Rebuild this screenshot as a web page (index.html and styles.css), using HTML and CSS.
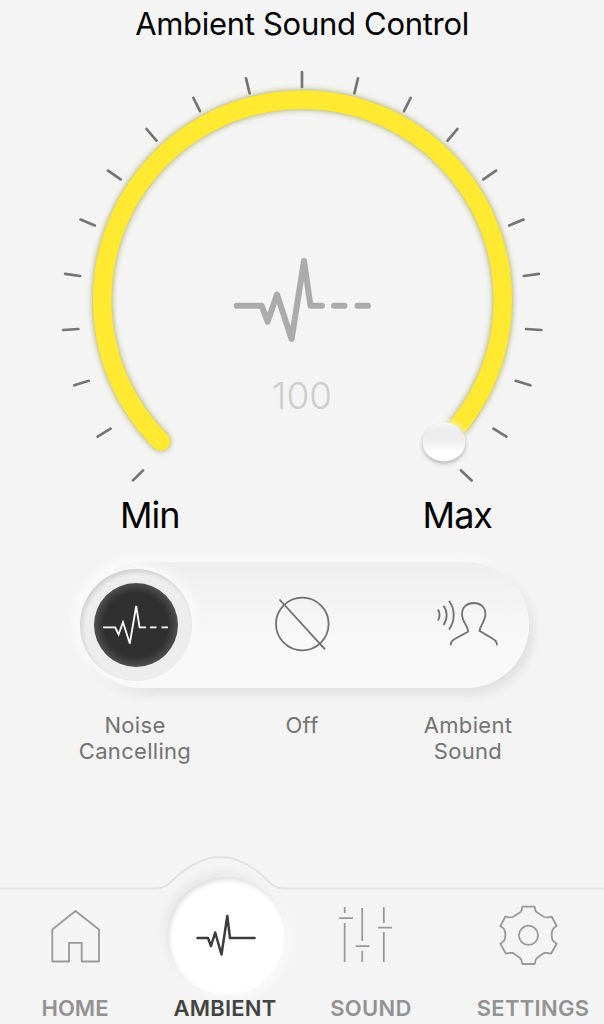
FILE: index.html
```html
<!DOCTYPE html>
<html lang="en">
  <head>
    <meta charset="UTF-8" />
    <meta name="viewport" content="width=device-width, initial-scale=1.0" />
    <title>Ambient Sound Control</title>
    <link rel="stylesheet" href="styles.css">
  </head>
  <body>
    <div class="screen">
      <h1>Ambient Sound Control</h1>

      <svg class="gauge" viewBox="0 50 604 440">
        <defs>
          <linearGradient id="thumbFill" x1="0" y1="0" x2="0" y2="1">
            <stop offset="0" stop-color="#f8f8f8" />
            <stop offset="0.2" stop-color="#ececec" />
            <stop offset="0.45" stop-color="#eeeeee" />
            <stop offset="0.75" stop-color="#ffffff" />
            <stop offset="1" stop-color="#fafafa" />
          </linearGradient>
        </defs>
        <g class="ticks">
          <path d="M302 72V87" />
          <path d="M246 78.3L249.6 93.3M358 78.3L354.4 93.3" />
          <path d="M193.4 98L200 111.2M410.6 98L404 111.2" />
          <path d="M146.6 129L156.4 140.6M457.4 129L447.6 140.6" />
          <path d="M108 170.6L120.6 179.4M496 170.6L483.4 179.4" />
          <path d="M80.6 219.6L94.8 225.4M523.4 219.6L509.2 225.4" />
          <path d="M65.2 273.8L80.2 276M538.8 273.8L523.8 276" />
          <path d="M63.2 330L78.4 329M541.3 330L526.1 329" />
          <path d="M74.2 385.3L88.8 380.8M530.3 385.3L515.7 380.8" />
          <path d="M97.6 436.6L110.6 428.7M506.4 436.6L493.4 428.7" />
          <path d="M133 480.4L143 470.4M471.6 480.4L461 470.4" />
        </g>
        <path class="arc" d="M160.8 441.5A200.3 200.3 0 1 1 444.2 441.5" />
        <g class="pulse">
          <path d="M236.7 305.8H261.7L267.6 321.7L277 294.5L291.6 339L304 261L310.5 305.8H322" />
          <path d="M334 305.8H344.5M357.5 305.8H368" />
        </g>
        <text class="value" x="302" y="409">100</text>
        <ellipse class="thumb" cx="444" cy="442" rx="21.5" ry="19.5" />
      </svg>

      <div class="range">
        <span>Min</span>
        <span>Max</span>
      </div>

      <div class="switch">
        <button class="mode mode-active" aria-label="Noise Cancelling">
          <svg width="84" height="84" viewBox="0 0 84 84">
            <path d="M9 44.3H21.2L24.6 51.5L29 39.3L35.8 60.5L42.2 23L45.6 44.3H52M56 44.3H62.5M67.5 44.3H74" />
          </svg>
        </button>
        <button class="mode" aria-label="Off">
          <svg width="84" height="84" viewBox="0 0 84 84">
            <circle cx="42.3" cy="41" r="26.3" />
            <path d="M19.5 16.5L65 66.3" />
          </svg>
        </button>
        <button class="mode" aria-label="Ambient Sound">
          <svg width="84" height="84" viewBox="0 0 84 84">
            <path d="M25.7 62.3C25.7 58.5 27.3 57.3 31 55.2L43 48.7C43.5 43 37 39.5 37 31C37 24 42 20 48.7 20S60.4 24 60.4 31C60.4 38 55.2 42.5 54.5 47.8L66.5 55C70 57 72 58.3 72 62.3" />
            <path d="M13 26.5C15 30 15 34 13 37.5M18.5 22.7C22.7 28 22.7 36 18.5 42M24 18C30.2 25.5 30.2 38 24 46.5" />
          </svg>
        </button>
      </div>

      <div class="labels">
        <span>Noise<br>Cancelling</span>
        <span>Off</span>
        <span>Ambient<br>Sound</span>
      </div>

      <nav>
        <svg class="nav-edge" viewBox="0 0 604 168">
          <path d="M0 32.5H156C164 32.5 168 29 174 23C190 8 204 1 220 1S250 8 264 21C271 28 275 32.5 284 32.5H604" />
        </svg>
        <a class="tab">
          <svg width="60" height="60" viewBox="0 0 60 60">
            <path d="M7.3 24.5L30.5 6L54 24.5V56.5H36.7V37.8H24V56.5H7.3Z" />
          </svg>
          <span>HOME</span>
        </a>
        <a class="tab tab-active">
          <div class="bubble">
            <svg width="60" height="60" viewBox="0 0 60 60">
              <path d="M1.5 32H12L15 40L19.2 26.5L25.5 48.5L31.3 10L34 32H58.5" />
            </svg>
          </div>
          <span>AMBIENT</span>
        </a>
        <a class="tab tab-sound">
          <svg width="60" height="60" viewBox="0 0 60 60">
            <path d="M9.7 2V8M9.7 18V57M4 13.2H18M27.2 3V36M27.2 46V57M20.7 41.2H34.5M48.8 2V18M48.8 27V57M43 22.6H57" />
          </svg>
          <span>SOUND</span>
        </a>
        <a class="tab tab-settings">
          <svg width="60" height="60" viewBox="0 0 60 60">
            <path d="M24.3 1.7H36.7Q37 5.8 38.7 7.3L46.3 12Q49.5 12.8 53.7 11.7L58.7 21Q54.8 23.2 54.3 25.5Q53 30 54.3 34.5Q54.8 36.5 58.7 38.8L53 48.7Q49.5 47.6 46 48Q42.5 50.2 38.7 53.3Q37 55 36.7 59H24.3Q24 55 22.3 53.3Q18.5 50.2 15 48Q11.5 47.6 8 48.7L2.3 38.8Q6.2 36.5 6.7 34.5Q8 30 6.7 25.5Q6.2 23.2 2.3 21L7.3 11.7Q11.5 12.8 14.7 12L22.3 7.3Q24 5.8 24.3 1.7Z" />
            <circle cx="30.5" cy="30.3" r="9.6" />
          </svg>
          <span>SETTINGS</span>
        </a>
      </nav>
    </div>
  </body>
</html>
```

FILE: styles.css
```css
* {
  box-sizing: border-box;
}
body {
  margin: 0;
  font-family: Inter, Roboto, "Liberation Sans", sans-serif;
  background-color: #f4f4f4;
  color: #000;
}
.screen {
  width: 604px;
  height: 1024px;
  overflow: hidden;
  display: flex;
  flex-direction: column;
}
h1 {
  margin: 0;
  height: 50px;
  line-height: 48px;
  font-size: 31px;
  font-weight: 400;
  letter-spacing: -0.3px;
  text-align: center;
}
.gauge {
  display: block;
  width: 604px;
  height: 440px;
}
.ticks {
  fill: none;
  stroke: #747474;
  stroke-width: 2.7;
  stroke-linecap: round;
}
.arc {
  fill: none;
  stroke: #ffe931;
  stroke-width: 18.5;
  stroke-linecap: round;
  filter: drop-shadow(0 0 3px rgba(125, 125, 0, 0.7));
}
.pulse {
  fill: none;
  stroke: #ababab;
  stroke-width: 6;
  stroke-linecap: round;
  stroke-linejoin: round;
}
.value {
  fill: #cdcdcd;
  font-size: 37px;
  font-weight: 300;
  text-anchor: middle;
}
.thumb {
  fill: url(#thumbFill);
  filter: drop-shadow(0 2px 2px rgba(0, 0, 0, 0.3)) drop-shadow(0 -1px 3px #fff);
}
.range {
  display: flex;
  justify-content: space-between;
  height: 72px;
  padding: 0 112px 0 120px;
  font-size: 36px;
  line-height: 50px;
  letter-spacing: -1px;
}
.switch {
  display: flex;
  align-items: center;
  justify-content: space-between;
  width: 449px;
  height: 126px;
  margin-left: 80px;
  padding: 0 20px 0 0;
  border-radius: 63px;
  background: linear-gradient(#eeeeee, #f8f8f8 60%, #f8f8f8);
  box-shadow: 4px 6px 12px rgba(0, 0, 0, 0.09), -4px -5px 10px #fafafa;
}
.mode {
  width: 84px;
  height: 84px;
  padding: 0;
  border: none;
  border-radius: 50%;
  background: none;
}
.mode svg {
  display: block;
  fill: none;
  stroke: #707070;
  stroke-width: 1.8;
}
/* the active knob is wider than the others, the margin keeps the middle icon centered */
.mode-active {
  width: 112px;
  height: 112px;
  margin-right: -14px;
  padding: 14px;
  background-color: #ededed;
  box-shadow: inset 2px 3px 4px rgba(0, 0, 0, 0.12), 0 0 8px 6px #f9f9f9;
}
.mode-active svg {
  border-radius: 50%;
  background: radial-gradient(circle, #303030 54%, #505050 71%);
  stroke: #fff;
}
.labels {
  display: grid;
  grid-template-columns: 168px 166px 166px;
  height: 168px;
  padding: 24px 0 0 51px;
  color: #737373;
  font-size: 22px;
  line-height: 26px;
  letter-spacing: 0.3px;
  text-align: center;
}
nav {
  position: relative;
  display: grid;
  grid-template-columns: 150px 150px 142px 182px;
  height: 168px;
}
.nav-edge {
  position: absolute;
  top: 0;
  left: 0;
  width: 604px;
  height: 168px;
  fill: none;
  stroke: #e2e2e2;
  stroke-width: 1.8;
}
.tab {
  position: relative;
  display: flex;
  flex-direction: column;
  align-items: center;
  padding: 49px 0 3px;
  color: #929292;
  font-size: 22px;
  font-weight: 600;
  line-height: 26px;
}
.tab svg {
  fill: none;
  stroke: #999;
  stroke-width: 1.8;
  stroke-linejoin: round;
}
.tab span {
  margin-top: auto;
}
.tab-active {
  padding-top: 21px;
  color: #434343;
}
.tab-active span {
  letter-spacing: 0.2px;
}
.bubble {
  width: 118px;
  height: 118px;
  margin-left: 1px;
  padding: 29px;
  border-radius: 50%;
  background-color: #fff;
  box-shadow: inset 2px 3px 5px rgba(0, 0, 0, 0.13), -3px -5px 10px rgba(0, 0, 0, 0.05), 4px 3px 10px #fafafa;
}
.tab-active svg {
  stroke: #3c3c3c;
  stroke-width: 2.5;
  stroke-linecap: round;
}
.tab-sound span,
.tab-settings span {
  letter-spacing: 0.3px;
}
.tab-sound svg {
  margin-right: 12px;
}
.tab-settings svg {
  margin-right: 10px;
}
```
